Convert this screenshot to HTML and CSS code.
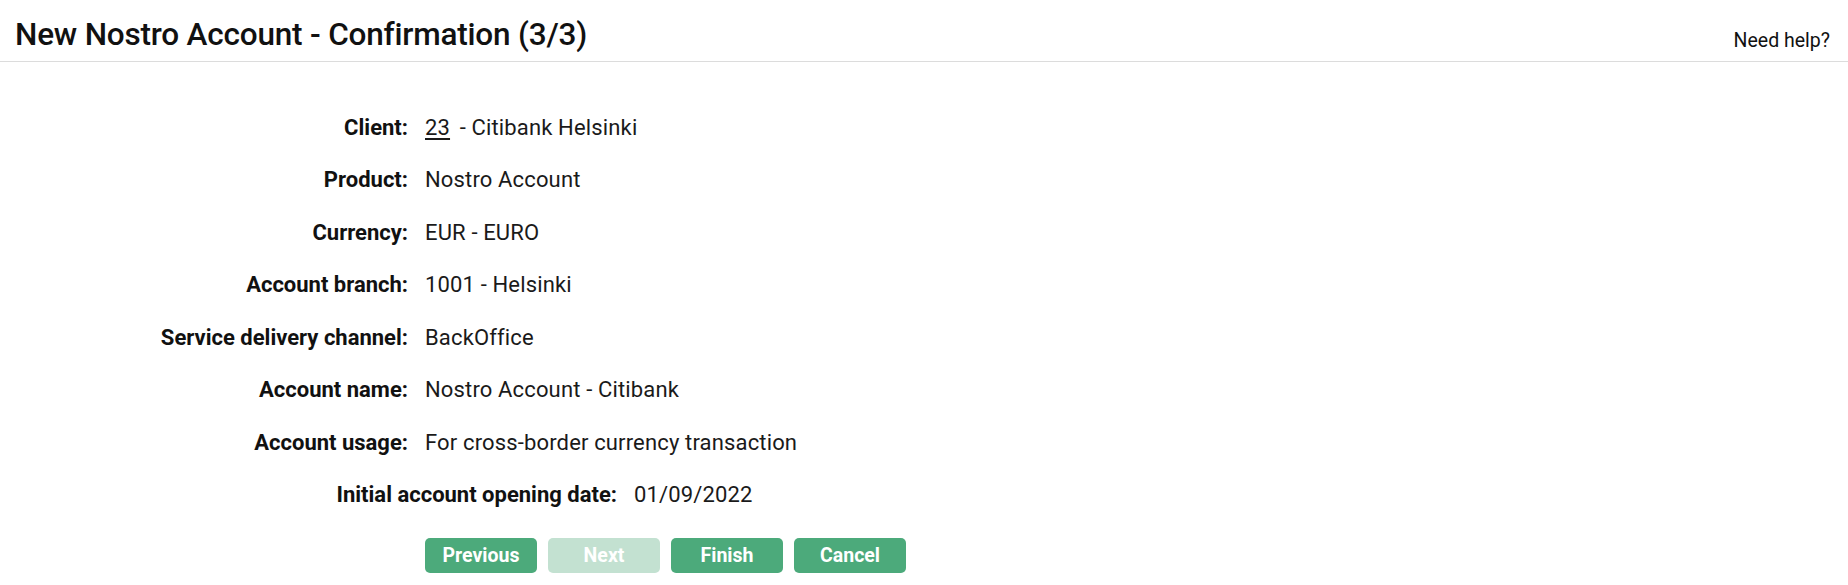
FILE: index.html
```html
<!DOCTYPE html>
<html>
<head>
<meta charset="utf-8">
<link rel="stylesheet" href="styles.css">
</head>
<body>
<header class="header">
  <h1 class="title">New Nostro Account - Confirmation (3/3)</h1>
  <a class="help">Need help?</a>
</header>
<main class="content">
  <dl class="details">
    <dt>Client:</dt><dd><a class="link">23</a> - Citibank Helsinki</dd>
    <dt>Product:</dt><dd>Nostro Account</dd>
    <dt>Currency:</dt><dd>EUR - EURO</dd>
    <dt>Account branch:</dt><dd>1001 - Helsinki</dd>
    <dt>Service delivery channel:</dt><dd>BackOffice</dd>
    <dt>Account name:</dt><dd>Nostro Account - Citibank</dd>
    <dt>Account usage:</dt><dd>For cross-border currency transaction</dd>
  </dl>
  <dl class="details details-wide">
    <dt>Initial account opening date:</dt><dd>01/09/2022</dd>
  </dl>
  <div class="actions">
    <button class="btn">Previous</button>
    <button class="btn btn-disabled" disabled>Next</button>
    <button class="btn">Finish</button>
    <button class="btn">Cancel</button>
  </div>
</main>
</body>
</html>
```
FILE: styles.css
```css
html, body {
  margin: 0;
  padding: 0;
  background: #ffffff;
}
body {
  font-family: Roboto, "Liberation Sans", sans-serif;
  color: #111;
}
.header {
  display: flex;
  justify-content: space-between;
  align-items: flex-start;
  height: 62px;
  box-sizing: border-box;
  padding: 8px 18px 0 15px;
  border-bottom: 1px solid #dcdcdc;
}
.title {
  margin: 0;
  font-size: 31.5px;
  font-weight: 500;
  line-height: 53px;
  color: #111;
  letter-spacing: -0.2px;
}
.help {
  font-size: 19.5px;
  color: #111;
  line-height: 53px;
  padding-top: 6px;
}
.content {
  padding-top: 39px;
}
.details {
  display: grid;
  grid-template-columns: 408px 1fr;
  column-gap: 17px;
  grid-auto-rows: 52.5px;
  align-items: center;
  margin: 0;
}
.details dt {
  text-align: right;
  font-weight: 700;
  font-size: 22px;
  color: #111;
}
.details dd {
  margin: 0;
  font-size: 22px;
  letter-spacing: 0.15px;
  color: #1a1a1a;
}
.details-wide {
  grid-template-columns: 617px 1fr;
}
.link {
  text-decoration: underline;
  text-underline-offset: 3px;
  margin-right: 4px;
}
.actions {
  display: flex;
  gap: 11px;
  padding-left: 425px;
  margin-top: 17px;
}
.btn {
  width: 112px;
  height: 35px;
  border: none;
  border-radius: 5px;
  background: #4caa7b;
  color: #fff;
  font-family: Roboto, "Liberation Sans", sans-serif;
  font-weight: 700;
  font-size: 19.5px;
  padding: 0;
}
.btn-disabled {
  background: #c3e1d1;
}
```
